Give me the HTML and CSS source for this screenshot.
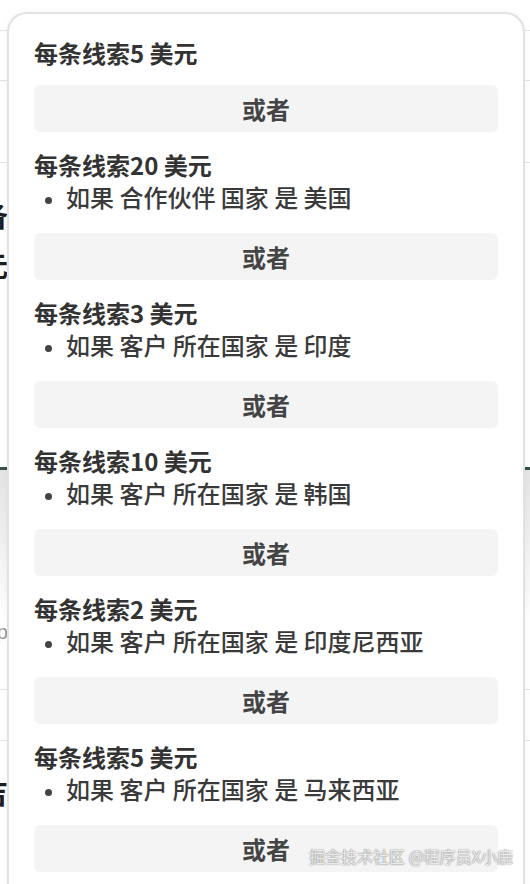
FILE: index.html
```html
<!DOCTYPE html>
<html lang="zh-CN">
<head>
    <meta charset="UTF-8">
    <title>线索定价规则</title>
    <link rel="stylesheet" href="styles.css">
</head>
<body>
    <!-- page behind the popover -->
    <div class="page">
        <div class="page-row row-a"></div>
        <div class="page-row row-b"></div>
        <div class="page-row row-c"></div>
        <div class="page-row row-d">
            <div class="edge-text">
                <span class="edge-title">合作伙伴准备</span>
                <span class="edge-title">美元</span>
            </div>
        </div>
        <div class="page-band"></div>
        <div class="page-row row-e">
            <div class="edge-text"><span class="edge-muted">Help</span></div>
        </div>
        <div class="page-row row-f"></div>
        <div class="page-row row-g">
            <div class="edge-text"><span class="edge-title">合作伙伴吉</span></div>
        </div>
    </div>

    <div class="popover">
        <div class="rule">
            <div class="rule-title">每条线索5 美元</div>
        </div>
        <div class="or-box">或者</div>

        <div class="rule">
            <div class="rule-title">每条线索20 美元</div>
            <ul class="rule-list">
                <li>如果 合作伙伴 国家 是 美国</li>
            </ul>
        </div>
        <div class="or-box">或者</div>

        <div class="rule">
            <div class="rule-title">每条线索3 美元</div>
            <ul class="rule-list">
                <li>如果 客户 所在国家 是 印度</li>
            </ul>
        </div>
        <div class="or-box">或者</div>

        <div class="rule">
            <div class="rule-title">每条线索10 美元</div>
            <ul class="rule-list">
                <li>如果 客户 所在国家 是 韩国</li>
            </ul>
        </div>
        <div class="or-box">或者</div>

        <div class="rule">
            <div class="rule-title">每条线索2 美元</div>
            <ul class="rule-list">
                <li>如果 客户 所在国家 是 印度尼西亚</li>
            </ul>
        </div>
        <div class="or-box">或者</div>

        <div class="rule">
            <div class="rule-title">每条线索5 美元</div>
            <ul class="rule-list">
                <li>如果 客户 所在国家 是 马来西亚</li>
            </ul>
        </div>
        <div class="or-box">或者</div>
    </div>

    <div class="watermark">掘金技术社区 @程序员X小鹿</div>
</body>
</html>
```

FILE: styles.css
```css
* {
    box-sizing: border-box;
}
body {
    margin: 0;
    width: 530px;
    height: 884px;
    overflow: hidden;
    position: relative;
    background-color: #fff;
    font-family: "Noto Sans CJK SC", "Noto Sans", sans-serif;
    color: #333;
}

/* background page */
.page {
    display: flex;
    flex-direction: column;
}
.page-row {
    border-bottom: 1px solid #e3e3e3;
}
.row-a { height: 31px; }
.row-b { height: 50px; }
.row-c { height: 82px; }
.row-d {
    height: 304px;
    border-bottom: none;
    padding-top: 27px;
}
.page-band {
    height: 154px;
    border-top: 3px solid #35524a;
    background: linear-gradient(#e4e4e4, #f6f6f6 70%, #fff);
}
.row-e {
    height: 69px;
}
.row-f { height: 51px; }
.row-g {
    height: 160px;
    border-bottom: none;
    padding-top: 26px;
}
.edge-text {
    width: 8px;
    display: flex;
    flex-direction: column;
    align-items: flex-end;
    overflow: hidden;
    white-space: nowrap;
}
.edge-title {
    font-size: 28px;
    font-weight: 700;
    line-height: 50px;
    color: #1e1e1e;
}
.edge-muted {
    font-size: 20px;
    color: #999;
    font-family: "Liberation Sans", sans-serif;
}

/* popover */
.popover {
    position: absolute;
    top: 12px;
    left: 7px;
    width: 518px;
    height: 900px;
    padding: 23px 25px 0;
    background-color: #fff;
    border: 2px solid #e2e2e2;
    border-bottom: none;
    border-radius: 20px 20px 0 0;
    box-shadow: 0 0 6px rgba(0,0,0,0.05);
}
.rule-title {
    font-size: 24px;
    line-height: 32px;
    font-weight: 700;
    color: #333;
}
.rule-list {
    list-style: none;
    margin: 0;
    padding: 0 0 4px;
}
.rule-list li {
    display: flex;
    align-items: center;
    font-size: 24px;
    line-height: 32px;
    font-weight: 500;
    color: #3a3a3a;
}
.rule-list li::before {
    content: "";
    width: 7px;
    height: 7px;
    margin: 7px 14px 0 11px;
    border-radius: 50%;
    background-color: #444;
}
.or-box {
    height: 47px;
    margin: 16px 0 17px;
    display: flex;
    align-items: center;
    justify-content: center;
    background-color: #f4f4f4;
    border-radius: 6px;
    font-size: 24px;
    font-weight: 700;
    color: #444;
}

.watermark {
    position: absolute;
    right: 17px;
    bottom: 16px;
    font-size: 16px;
    color: rgba(255,255,255,0.85);
    text-shadow: 0 0 1px #777, 0 0 2px rgba(0,0,0,0.35);
}
```
